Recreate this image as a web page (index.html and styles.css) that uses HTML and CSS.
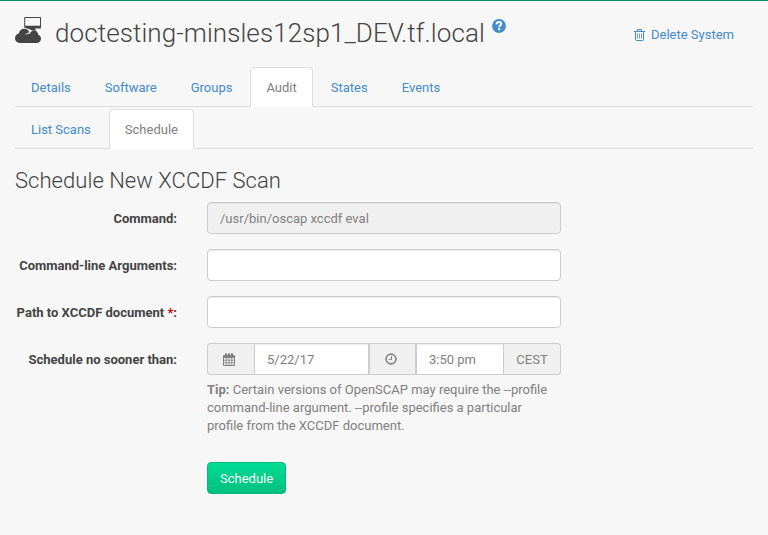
FILE: index.html
```html
<!DOCTYPE html>
<html lang="en">
<head>
<meta charset="utf-8">
<title>Schedule New XCCDF Scan</title>
<link rel="stylesheet" href="styles.css">
</head>
<body>
<header class="page-header">
  <svg class="system-icon" viewBox="0 0 28 28" width="28" height="28">
    <path fill="#444" fill-rule="evenodd" d="M10 1h15.200q.8 0 .8.800v9.800q0 .9-.9.900h-5.100v1h1v1h-4q-1.600-1.700-4-1.500-1-1-3-1.200-.8 0-.8-.9V1.800q0-.8.800-.8zM10.200 2v7.800h14.800V2z"/>
    <path fill="#444" d="M4.700 27C2 27 0 25 0 22.300c0-2.300 1.500-4.200 3.800-4.700C4.300 14.700 6.400 12.800 9.200 12.800c2.600 0 4.500 1.500 5.200 3.800-2.200.3-3.700 1.200-4.500 2.800 1.500-1.200 3-1.700 4.800-1.500.7-2.100 2.200-3.400 4.300-3.400 2.500 0 4.200 1.800 4.100 4.200 1.800.6 2.900 2 2.900 4 0 2.500-1.900 4.300-4.500 4.300z"/>
  </svg>
  <h1 class="page-title">doctesting-minsles12sp1_DEV.tf.local</h1>
  <a class="help-link" href="#" aria-label="Help">
    <svg viewBox="0 0 14 14" width="14" height="14">
      <circle cx="7" cy="7" r="6.900" fill="#428bca"/>
      <path d="M4.500 5.400C4.700 3.800 5.700 3.100 7 3.100c1.400 0 2.300.7 2.300 1.800 0 1.600-2.200 1.500-2.200 3.300" fill="none" stroke="#fff" stroke-width="2"/>
      <path d="M6 9.200h2.200v2H6z" fill="#fff"/>
    </svg>
  </a>
  <a class="delete-link" href="#">
    <svg viewBox="0 0 11 12" width="11" height="12" fill="none" stroke="#428bca">
      <path d="M0 2.500h11M3.500 2.300V.5h4v1.800M1.500 2.700v7.800q0 1 1 1h6q1 0 1-1V2.700"/>
      <path d="M3.500 4.500v5M5.500 4.500v5M7.500 4.500v5" stroke-width=".8"/>
    </svg>
    Delete System
  </a>
</header>
<nav class="tabs tabs-main">
  <a href="#">Details</a>
  <a href="#">Software</a>
  <a href="#">Groups</a>
  <a href="#" class="active">Audit</a>
  <a href="#">States</a>
  <a href="#">Events</a>
</nav>
<nav class="tabs tabs-sub">
  <a href="#">List Scans</a>
  <a href="#" class="active">Schedule</a>
</nav>
<h2 class="section-title">Schedule New XCCDF Scan</h2>
<form class="scan-form">
  <label class="form-label" for="command">Command:</label>
  <input class="control" id="command" type="text" value="/usr/bin/oscap xccdf eval" disabled>
  <label class="form-label" for="args">Command-line Arguments:</label>
  <input class="control" id="args" type="text">
  <label class="form-label" for="path">Path to XCCDF document <span class="required">*</span>:</label>
  <input class="control" id="path" type="text">
  <label class="form-label" for="date">Schedule no sooner than:</label>
  <div class="schedule">
    <div class="input-group">
      <span class="addon addon-icon addon-first">
        <svg viewBox="0 0 12 13" width="12" height="13">
          <path fill="#808080" fill-rule="evenodd" d="M1 2h1V1q0-1 1-1t1 1v1h1V1q0-1 1-1t1 1v1h1V1q0-1 1-1t1 1v1h1q1 0 1 1v9q0 1-1 1H1q-1 0-1-1V3q0-1 1-1zM1 5v1.800h1.800V5zM3.600 5v1.800h2V5zM6.400 5v1.800h2V5zM9.200 5v1.800H11V5zM1 7.600v1.800h1.800V7.600zM3.600 7.600v1.800h2V7.600zM6.400 7.600v1.800h2V7.600zM9.200 7.600v1.800H11V7.600zM1 10.200V12h1.800v-1.800zM3.600 10.200V12h2v-1.800zM6.400 10.200V12h2v-1.800zM9.200 10.200V12H11v-1.800z"/>
        </svg>
      </span>
      <input class="control date" id="date" type="text" value="5/22/17">
      <span class="addon addon-icon addon-time">
        <svg viewBox="0 0 12 12" width="12" height="12" fill="none" stroke="#808080">
          <circle cx="6" cy="6" r="4.900" stroke-width="1.600"/>
          <path d="M6.500 3v3.500H3.800"/>
        </svg>
      </span>
      <input class="control time" type="text" value="3:50 pm" aria-label="Time">
      <span class="addon addon-zone">CEST</span>
    </div>
    <p class="tip"><strong>Tip:</strong> Certain versions of OpenSCAP may require the --profile command-line argument. --profile specifies a particular profile from the XCCDF document.</p>
  </div>
  <button class="submit" type="button">Schedule</button>
</form>
</body>
</html>
```
FILE: styles.css
```css
* {
  box-sizing: border-box;
}

body {
  margin: 0;
  padding: 0 15px;
  min-height: 535px;
  border-top: 1px solid #00915f;
  background: #f7f7f7;
  color: #444;
  font: 13px/18px Roboto, sans-serif;
}

a {
  color: #428bca;
  text-decoration: none;
}

svg {
  display: block;
}

.page-header {
  display: flex;
  align-items: flex-start;
  height: 66px;
}

.system-icon {
  margin-top: 15px;
}

.page-title {
  margin: 14px 0 0 12px;
  font-size: 26px;
  line-height: 36px;
  font-weight: 300;
  letter-spacing: .085px;
  white-space: nowrap;
}

.help-link {
  margin: 18px 0 0 7px;
}

.delete-link {
  display: flex;
  align-items: center;
  gap: 6px;
  margin: 25px 19px 0 auto;
}

.tabs {
  display: flex;
  gap: 2px;
  border-bottom: 1px solid #ddd;
}

.tabs-main {
  height: 40px;
}

.tabs-sub {
  height: 40px;
  margin-top: 2px;
}

.tabs a {
  height: 40px;
  padding: 11px 15px 9px;
  border: 1px solid transparent;
  border-radius: 4px 4px 0 0;
}

.tabs .active {
  border-color: #ddd;
  border-bottom-color: #fff;
  background: #fff;
  color: #808080;
}

.section-title {
  margin: 19px 0 8px;
  font-size: 22px;
  line-height: 26px;
  font-weight: 300;
  letter-spacing: .04px;
}

.scan-form {
  display: grid;
  grid-template-columns: 162px 354px;
  column-gap: 30px;
  row-gap: 15px;
}

.form-label {
  padding-top: 8px;
  font-weight: 700;
  text-align: right;
  white-space: nowrap;
}

.required {
  color: #d00;
}

.control {
  width: 100%;
  height: 32px;
  margin: 0;
  padding: 6px 12px;
  border: 1px solid #ccc;
  border-radius: 4px;
  background: #fff;
  box-shadow: inset 0 1px 1px rgba(0, 0, 0, .075);
  color: #808080;
  font: inherit;
}

.control:disabled {
  background: #f0f0f0;
}

.input-group {
  display: flex;
  height: 32px;
}

.input-group .control {
  border-radius: 0;
}

.input-group .date {
  width: 115px;
}

.input-group .time {
  width: 88px;
}

.addon {
  display: flex;
  align-items: center;
  justify-content: center;
  border: 1px solid #ccc;
  background: #f0f0f0;
  color: #808080;
}

.addon-icon {
  width: 47px;
}

.addon-first {
  border-right: 0;
  border-radius: 4px 0 0 4px;
}

.addon-first svg {
  margin-right: 4px;
}

.addon-time svg {
  margin-right: 4px;
}

.addon-zone {
  flex: 1;
  padding-top: 1px;
  border-left: 0;
  border-radius: 0 4px 4px 0;
}

.tip {
  margin: 6px 0 12px;
  color: #808080;
}

.submit {
  grid-column: 2;
  justify-self: start;
  height: 32px;
  padding: 7px 12px 5px;
  border: 1px solid #00bb7a;
  border-radius: 4px;
  background: linear-gradient(#00dc93, #00c07f);
  color: #fff;
  font: inherit;
}
```
